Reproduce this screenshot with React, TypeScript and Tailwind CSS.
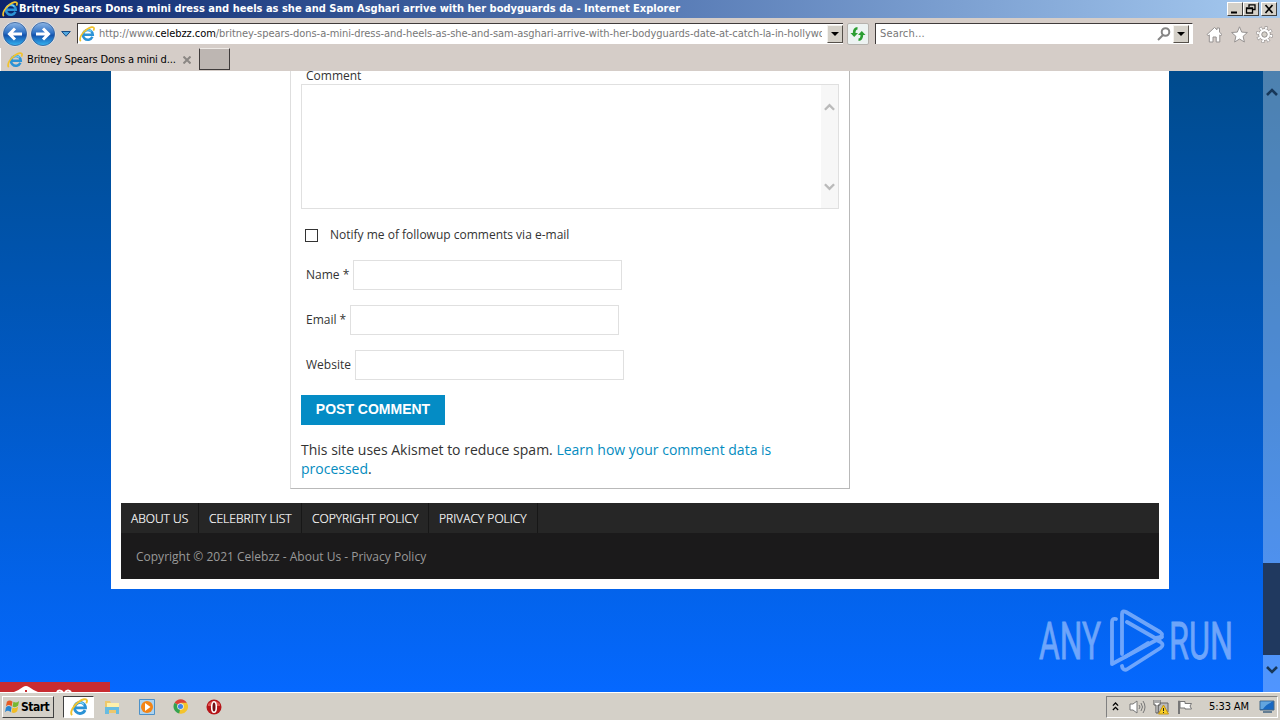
import type { ReactNode } from "react";

const footerLinks = [
  { label: "ABOUT US", width: "w-[78px]" },
  { label: "CELEBRITY LIST", width: "w-[103px]" },
  { label: "COPYRIGHT POLICY", width: "w-[127px]" },
  { label: "PRIVACY POLICY", width: "w-[109px]" },
];

const fields = [
  { label: "Name *", width: "w-[47px]" },
  { label: "Email *", width: "w-[44px]" },
  { label: "Website", width: "w-[49px]" },
];

function IeIcon({ className }: { className: string }) {
  return (
    <svg viewBox="0 0 16 16" className={className} fill="none">
      <path d="M13.4 10.8A4.900 4.900 0 1 1 13.800 8.800H5" stroke="#2b93d6" strokeWidth="2.5" />
      <path d="M12.4 5.5A4.9 4.9 0 0 0 4.2 7" stroke="#7fd6f8" strokeWidth="1.2" />
      <path d="M1.8 15.2C-.5 12.8 3.2 6.3 8 3.2 11.3 1 14.5.3 15 2c.2.8-.1 1.8-.6 2.7" stroke="#f0c22e" strokeWidth="1.7" />
    </svg>
  );
}

function NavCircle({ flip = false }: { flip?: boolean }) {
  return (
    <svg viewBox="0 0 26 26" className={flip ? "size-[26px] -scale-x-100" : "size-[26px]"}>
      <defs>
        <linearGradient id="orb" x1="0" y1="0" x2="0" y2="1">
          <stop offset="0" stopColor="#8db5e4" />
          <stop offset=".45" stopColor="#2f72c6" />
          <stop offset=".55" stopColor="#1352ad" />
          <stop offset="1" stopColor="#36b5f2" />
        </linearGradient>
      </defs>
      <circle cx="13" cy="13" r="12.5" fill="#e9eef5" />
      <circle cx="13" cy="13" r="11.6" fill="url(#orb)" stroke="#315b94" strokeWidth=".8" />
      <path d="M20 13H8M13 7.5 7.5 13l5.500 5.500" fill="none" stroke="#fff" strokeWidth="3" />
    </svg>
  );
}

function Chevron({ down = false, className }: { down?: boolean; className: string }) {
  return (
    <svg viewBox="0 0 12 8" className={className} fill="none" stroke="currentColor" strokeWidth="2.6">
      <path d={down ? "m1 1 5 5 5-5" : "m1 7 5-5 5 5"} />
    </svg>
  );
}

function DropButton() {
  return (
    <div className="flex h-[18px] w-[16px] items-center justify-center border border-t-[#f4f2ee] border-r-[#55504a] border-b-[#55504a] border-l-[#f4f2ee] bg-[#d4d0c8]">
      <svg viewBox="0 0 8 4" className="h-1 w-2">
        <path d="M0 0h8L4 4z" />
      </svg>
    </div>
  );
}

function WindowButton({ children }: { children: ReactNode }) {
  return (
    <div className="flex h-[14px] w-4 items-center justify-center border border-t-white border-r-[#404040] border-b-[#404040] border-l-white bg-[#d4d0c8]">
      <svg viewBox="0 0 12 10" className="h-[10px] w-3" fill="none" stroke="#000">
        {children}
      </svg>
    </div>
  );
}

function TitleBar() {
  return (
    <div className="flex h-[18px] items-center bg-linear-to-r from-[#0b246b] via-[#5578b3] to-[#a6caf0] pl-[2px] pr-[3px]">
      <IeIcon className="size-4 shrink-0" />
      <span className="ml-px w-[662px] whitespace-nowrap pt-px font-['DejaVu_Sans_Condensed','DejaVu_Sans',sans-serif] text-[11px] font-bold tracking-[0.01px] text-white [font-stretch:condensed]">
        Britney Spears Dons a mini dress and heels as she and Sam Asghari arrive with her bodyguards da - Internet Explorer
      </span>
      <div className="ml-auto flex">
        <WindowButton>
          <path d="M2 8.500h6" strokeWidth="2" />
        </WindowButton>
        <WindowButton>
          <path d="M4 3V.9h6v4.600H8M1.500 4h6v5h-6zM1.500 4.500h6" strokeWidth="1.300" />
        </WindowButton>
        <div className="w-[2px]" />
        <WindowButton>
          <path d="m2.500 1 7 8m0-8-7 8" strokeWidth="1.700" />
        </WindowButton>
      </div>
    </div>
  );
}

function AddressRow() {
  return (
    <div className="flex h-7 items-center pt-[3px] font-['DejaVu_Sans_Condensed','DejaVu_Sans',sans-serif] text-[11px] text-[#777] [font-stretch:condensed]">
      <div className="ml-[2px] flex gap-[2px]">
        <NavCircle />
        <NavCircle flip />
      </div>
      <svg viewBox="0 0 10 6" className="ml-[5px] mr-[6px] h-[6px] w-[10px]">
        <path d="M.7.500h8.600L5 5.300z" fill="#51a7df" stroke="#174d86" />
      </svg>
      <div className="flex h-[21px] w-[766px] items-center border-t border-l border-t-[#403b3b] border-l-[#403b3b] border-b border-b-white bg-white">
        <IeIcon className="ml-px size-4 shrink-0" />
        <span className="ml-1 w-[723px] overflow-hidden whitespace-nowrap pt-px tracking-[-0.06px]">
          http://www.<span className="text-black">celebzz.com</span>/britney-spears-dons-a-mini-dress-and-heels-as-she-and-sam-asghari-arrive-with-her-bodyguards-date-at-catch-la-in-hollywo
        </span>
        <div className="ml-auto">
          <DropButton />
        </div>
      </div>
      <div className="ml-[4px] flex size-[22px] items-center justify-center rounded-[2px] border border-[#b6b2ad] bg-[#edf3f2]">
        <svg viewBox="0 0 16 14" className="h-[14px] w-4">
          <path d="M7.500 0v2.500Q5.500 2.500 5.500 6H8l-3.800 4L.5 6h2.300Q2.800.5 7.500 0z" fill="#2c9e32" />
          <path d="M8.500 14v-2.500q2 0 2-3.500H8l3.800-4L15.500 8h-2.300q0 5.500-4.700 6z" fill="#2c9e32" />
        </svg>
      </div>
      <div className="ml-[6px] flex h-[21px] w-[318px] items-center border-t border-l border-t-[#403b3b] border-l-[#403b3b] border-r border-r-white bg-white pl-1">
        <span className="pt-px tracking-[0.15px]">Search...</span>
        <svg viewBox="0 0 14 14" className="ml-auto mr-[2px] size-[14px]" fill="none" stroke="#858585" strokeWidth="2">
          <circle cx="8.500" cy="5" r="3.800" />
          <path d="m6 8-5 5" />
        </svg>
        <DropButton />
        <div className="w-[3px]" />
      </div>
      <div className="ml-[13px] flex gap-2 pt-[2px]">
        <svg viewBox="0 0 17 17" className="size-[17px]" fill="#fff" stroke="#969291">
          <path d="m1 8.500 7.500-7 2.500 2.300V2h2.500v4.200L16 8.500l-1.200 1.200-1-.8V16h-3.600v-5H7v5H3.300V8.900l-1.100.9z" />
        </svg>
        <svg viewBox="0 0 17 17" className="size-[17px]" fill="#fff" stroke="#969291">
          <path d="m8.500.8 2.200 5.300 5.700.4-4.300 3.800 1.300 5.700-4.900-3-4.900 3 1.300-5.700L.6 6.500l5.700-.4z" />
        </svg>
        <svg viewBox="0 0 17 17" className="size-[17px]">
          <circle cx="8.500" cy="8.500" r="6.700" fill="none" stroke="#969291" strokeWidth="3.600" strokeDasharray="2.800 2.460" />
          <circle cx="8.500" cy="8.500" r="5.700" fill="none" stroke="#969291" />
          <circle cx="8.500" cy="8.500" r="6.600" fill="none" stroke="#fff" strokeWidth="2.600" strokeDasharray="1.800 3.380" strokeDashoffset="-.500" />
          <circle cx="8.500" cy="8.500" r="4.100" fill="none" stroke="#fff" strokeWidth="2.600" />
          <circle cx="8.500" cy="8.500" r="2.700" fill="#d4d0c8" stroke="#969291" />
        </svg>
      </div>
    </div>
  );
}

function TabRow() {
  return (
    <div className="flex h-[25px] items-start">
      <div className="mt-[2px] flex h-[23px] w-[197px] items-center border-l border-white pl-[6px] pt-px font-['DejaVu_Sans_Condensed','DejaVu_Sans',sans-serif] text-[11px] text-black [font-stretch:condensed]">
        <IeIcon className="size-4 shrink-0" />
        <span className="ml-[4px] w-[153px] whitespace-nowrap pt-px tracking-[-0.16px]">Britney Spears Dons a mini d...</span>
        <svg viewBox="0 0 8 8" className="ml-[3px] size-2 shrink-0" stroke="#8b8784" strokeWidth="2">
          <path d="m.500.500 7 7m0-7-7 7" />
        </svg>
      </div>
      <div className="ml-[2px] mt-[2px] h-[22px] w-[31px] border-r border-b border-l border-t border-[#3f3b3b] border-t-[#eeeae6] bg-[#bdb6b2]" />
    </div>
  );
}

function CommentForm() {
  return (
    <div className="h-[418px] w-[560px] border-r border-b border-l border-r-[#b9b9b9] border-b-[#b9b9b9] border-l-[#dedede] px-[10px] text-[12px] text-[#333]">
      <div className="h-[13px] pl-[5px] leading-[10px]">Comment</div>
      <div className="flex h-[125px] w-[538px] justify-end border border-[#e0e0e0]">
        <div className="flex w-[17px] flex-col items-center justify-between bg-[#f7f7f7] pb-[17px] pt-[18px] text-[#bababa]">
          <Chevron className="h-[8px] w-[11px]" />
          <Chevron down className="h-[8px] w-[11px]" />
        </div>
      </div>
      <label className="flex h-[51px] items-center pl-[4px] pt-[2px]">
        <span className="size-[13px] border border-[#333]" />
        <span className="ml-[12px] whitespace-nowrap pb-[2px]">Notify me of followup comments via e-mail</span>
      </label>
      <div className="flex flex-col gap-[15px]">
        {fields.map((field) => (
          <div key={field.label} className="flex h-[30px] items-center pl-[5px]">
            <span className={`${field.width} shrink-0 whitespace-nowrap`}>{field.label}</span>
            <div className="h-[30px] w-[269px] border border-[#e0e0e0]" />
          </div>
        ))}
      </div>
      <div className="mt-[15px] flex h-[30px] w-[144px] items-center justify-center bg-[#048cc5] pb-px font-['Liberation_Sans',Arial,sans-serif] text-[14px] font-bold text-white">
        <span className="whitespace-nowrap">POST COMMENT</span>
      </div>
      <p className="mt-[15px] text-[14px] leading-[19px]">
        This site uses Akismet to reduce spam. <span className="text-[#048cc0]">Learn how your comment data is<br />processed</span>.
      </p>
    </div>
  );
}

function Footer() {
  return (
    <div className="mx-[10px] mt-[14px] h-[76px] bg-[#1b1a1b]">
      <div className="flex h-[30px] bg-[#262626] text-[12px] text-white">
        {footerLinks.map((link) => (
          <span
            key={link.label}
            className={`${link.width} flex shrink-0 items-center whitespace-nowrap border-r border-[#171717] pl-[10px] pt-px font-light tracking-[0.02px] [-webkit-text-stroke:0.2px_white]`}
          >
            {link.label}
          </span>
        ))}
      </div>
      <p className="pl-[15px] text-[12px] leading-[47px] text-[#999]">Copyright © 2021 Celebzz - About Us - Privacy Policy</p>
    </div>
  );
}

function Watermark() {
  return (
    <svg viewBox="0 0 204 66" className="absolute left-[1037px] top-[537px] h-[66px] w-[204px] opacity-60" fill="#b5d0ff">
      <g fontFamily="Roboto, sans-serif" fontSize="52" stroke="#b5d0ff" strokeWidth=".8">
        <text x="2" y="51" textLength="62" lengthAdjust="spacingAndGlyphs">ANY</text>
        <text x="132" y="51" textLength="64" lengthAdjust="spacingAndGlyphs">RUN</text>
      </g>
      <g fill="none" stroke="#b5d0ff" strokeWidth="3.800" strokeLinejoin="round" strokeLinecap="round">
        <path d="M79 11q-4-1-4 3v42l50-27" />
        <path d="M85 46V6q0-4 4-2l34 20q4 3 0 5l-5 1-28-16" />
        <path d="m85 58 .500 2q2 3 5 1l33-21q4-3 0-6l-4-2" />
        <path d="m88 49 23-14" />
      </g>
    </svg>
  );
}

function Page() {
  return (
    <div className="relative flex h-[621px] overflow-hidden bg-linear-to-b from-[#004b8d] via-[#0159c4] to-[#0568ff] font-['Open_Sans',sans-serif]">
      <main className="ml-[111px] h-[518px] w-[1058px] bg-white">
        <div className="pl-[179px]">
          <CommentForm />
        </div>
        <Footer />
      </main>
      <div className="ml-auto flex w-[17px] flex-col items-center bg-white/30 pt-[17px] text-[#173759]">
        <Chevron className="h-[8px] w-[12px]" />
        <div className="mt-[467px] h-[92px] w-full bg-[#20395f]" />
        <Chevron down className="mt-[11px] h-[8px] w-[12px]" />
      </div>
      <Watermark />
      <svg viewBox="0 0 110 10" className="absolute bottom-0 left-0 h-[10px] w-[110px]">
        <path d="M0 0h110v10H0z" fill="#c92c30" />
        <path d="M14 10q5-2 9-5 3-2 6 0 4 3 9 5z" fill="#fff" />
        <path d="M25 8h2v2h-2z" fill="#c92c30" />
        <path d="M57 10q2-3 6 0m2 0q3-3 6 0" fill="none" stroke="#fff" strokeWidth="2" />
      </svg>
    </div>
  );
}

function Taskbar() {
  return (
    <div className="flex h-7 items-center border-t border-white bg-[#d4d0c8] pl-[2px] font-['DejaVu_Sans_Condensed','DejaVu_Sans',sans-serif] text-[11px] text-black [font-stretch:condensed]">
      <div className="flex h-[22px] w-[52px] items-center border border-t-white border-r-[#404040] border-b-[#404040] border-l-white pl-[2px]">
        <svg viewBox="0 0 16 16" className="size-[15px] shrink-0">
          <path d="M2 3q3-3 6 0L7 8Q4 5 1 8z" fill="#e75b24" />
          <path d="M9 3q3 2 6-1l-1 5q-3 3-6 1z" fill="#77b832" />
          <path d="M1 9q3-3 6 0l-1 5q-3-3-6 0z" fill="#2885d1" />
          <path d="M8 9q3 2 6-1l-1 5q-3 3-6 1z" fill="#f1bd25" />
        </svg>
        <span className="ml-px text-[12px] font-bold tracking-[-0.5px]">Start</span>
      </div>
      <div className="ml-[9px] flex h-[22px] w-[31px] items-center justify-center border border-t-[#404040] border-r-white border-b-white border-l-[#404040] bg-white">
        <IeIcon className="size-[18px]" />
      </div>
      <svg viewBox="0 0 16 16" className="ml-[10px] size-4">
        <path d="M1 2h5l1 2h7v10H1z" fill="#edc76c" />
        <path d="M3 4h12v5H3z" fill="#fff0aa" />
        <path d="M1 8h14v7h-3v-4H5v4H1z" fill="#68bce1" />
      </svg>
      <svg viewBox="0 0 16 16" className="ml-[19px] size-4">
        <path d="M.5.5h15v15H.5z" fill="#add3ef" stroke="#4d91c8" />
        <circle cx="8" cy="8" r="6" fill="#f38415" />
        <path d="m6 4 5.500 4L6 12z" fill="#fff" />
      </svg>
      <svg viewBox="0 0 16 16" className="ml-[18px] size-[15px]">
        <path d="M8 8 1.700 4a7.500 7.500 0 0 1 13 0z" fill="#dd4236" />
        <path d="M8 8 1.700 4a7.500 7.500 0 0 0 5 11.400L11 9z" fill="#35a24f" />
        <path d="M8 8 6.700 15.400A7.500 7.500 0 0 0 14.700 4H8z" fill="#f4c42c" />
        <circle cx="8" cy="8" r="3.500" fill="#eee" />
        <circle cx="8" cy="8" r="2.700" fill="#4385e7" />
      </svg>
      <svg viewBox="0 0 16 16" className="ml-[18px] size-4">
        <circle cx="8" cy="8" r="7.500" fill="#b61519" />
        <path d="M2 5q6-6 12 0v2H2z" fill="#df5552" />
        <ellipse cx="8" cy="8" rx="2.300" ry="5.300" fill="#741015" stroke="#fff" strokeWidth="1.600" />
      </svg>
      <div className="ml-auto mr-[2px] flex h-[22px] w-[172px] items-center border border-t-[#808080] border-r-white border-b-white border-l-[#808080]">
        <svg viewBox="0 0 8 10" className="ml-[5px] h-[9px] w-[7px]" fill="none" stroke="#000" strokeWidth="1.500">
          <path d="m1 4 3-3 3 3M1 9l3-3 3 3" />
        </svg>
        <svg viewBox="0 0 17 14" className="ml-[10px] h-[14px] w-[17px]" fill="#fff" stroke="#777">
          <path d="M1 4h3l4-3v12l-4-3H1z" />
          <path d="M10 5q2 2 0 4m2-6q3 4 0 8m2-10q4 6 0 12" fill="none" />
        </svg>
        <svg viewBox="0 0 16 16" className="ml-[7px] size-4">
          <path d="M5 4h10v9H5z" fill="#bbb" stroke="#666" />
          <path d="M1 1v5h2v8h2V6h2V1M3 1v3m2-3v3" fill="#fff" stroke="#555" />
          <path d="m10.500 6 5 9h-10z" fill="#f8cf26" stroke="#c49412" />
          <path d="M10.500 9v3m0 1v1" stroke="#222" />
        </svg>
        <svg viewBox="0 0 16 14" className="ml-2 h-[14px] w-4" fill="#fff" stroke="#777">
          <path d="M1.500 14V1h1v13M3 1.500h5v2h6.500L13 6l1.500 3H8V8H3z" />
        </svg>
        <span className="ml-[16px] w-[42px] whitespace-nowrap pt-[2px] tracking-[-0.1px]">5:33 AM</span>
        <svg viewBox="0 0 16 14" className="ml-auto mr-[2px] h-[14px] w-4">
          <path d="M1 1h14v9H1z" fill="#1868c2" stroke="#476985" />
          <path d="M1.500 1.500H14Q7 4 4 9H1.500z" fill="#62a5df" />
          <path d="M4 12h9" stroke="#657e93" strokeWidth="2" />
        </svg>
      </div>
    </div>
  );
}

export default function App() {
  return (
    <div className="flex h-[720px] w-[1280px] flex-col overflow-hidden bg-[#d5cdc8]">
      <TitleBar />
      <AddressRow />
      <TabRow />
      <Page />
      <Taskbar />
    </div>
  );
}
